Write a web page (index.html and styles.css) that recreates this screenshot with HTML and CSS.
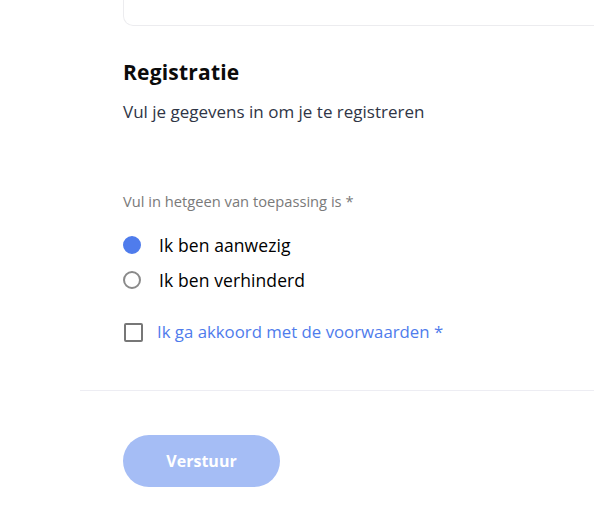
FILE: index.html
```html
<!DOCTYPE html>
<html lang="nl">
<head>
<meta charset="utf-8">
<link rel="stylesheet" href="styles.css">
</head>
<body>
<div class="page">
  <div class="inner">
    <div class="card"></div>
    <h2 class="title">Registratie</h2>
    <p class="subtitle">Vul je gegevens in om je te registreren</p>
    <p class="label">Vul in hetgeen van toepassing is *</p>
    <div class="radios">
      <label class="option"><span class="radio checked"></span><span>Ik ben aanwezig</span></label>
      <label class="option"><span class="radio"></span><span>Ik ben verhinderd</span></label>
    </div>
    <label class="agree"><span class="box"></span><span class="agree-text">Ik ga akkoord met de voorwaarden *</span></label>
  </div>
  <div class="separator"></div>
  <div class="inner">
    <button class="submit" type="button">Verstuur</button>
  </div>
</div>
</body>
</html>
```
FILE: styles.css
```css
html, body {
  margin: 0;
  padding: 0;
  background: #ffffff;
  overflow: hidden;
}
body {
  font-family: "Open Sans", "Liberation Sans", sans-serif;
  color: #000;
}
.page {
  padding-left: 80px;
}
.inner {
  padding-left: 43px;
}
.card {
  height: 25px;
  margin-right: -40px;
  border: 1px solid #ececef;
  border-top: none;
  border-radius: 0 0 0 10px;
}
.title {
  margin: 32px 0 0;
  font-size: 21px;
  line-height: 28px;
  font-weight: 700;
  letter-spacing: 0.2px;
  color: #0b0b0b;
}
.subtitle {
  margin: 15px 0 0;
  font-size: 17px;
  line-height: 22px;
  color: #2f3546;
}
.label {
  margin: 68px 0 0;
  font-size: 14.7px;
  line-height: 20px;
  color: #7a7a7a;
}
.radios {
  margin-top: 23px;
  display: flex;
  flex-direction: column;
  gap: 13px;
}
.option {
  display: flex;
  align-items: center;
  gap: 18px;
  font-size: 17.5px;
  line-height: 22px;
  letter-spacing: 0.1px;
  color: #000;
}
.radio {
  width: 14px;
  height: 14px;
  border: 2px solid #8a8a8a;
  border-radius: 50%;
  flex: none;
}
.radio.checked {
  border-color: #4f7cec;
  background: #4f7cec;
}
.agree {
  margin-top: 30px;
  display: flex;
  align-items: center;
  gap: 14px;
  font-size: 16.8px;
  line-height: 22px;
}
.box {
  width: 15px;
  height: 15px;
  border: 2px solid #777;
  border-radius: 2px;
  flex: none;
  margin-left: 1px;
}
.agree-text {
  color: #4f7cec;
}
.separator {
  margin-top: 47px;
  height: 1px;
  background: #ededf3;
}
.submit {
  margin-top: 44px;
  width: 157px;
  height: 52px;
  border: none;
  border-radius: 26px;
  background: #a5bdf5;
  color: #ffffff;
  font-family: inherit;
  font-size: 16px;
  font-weight: 700;
}
```
